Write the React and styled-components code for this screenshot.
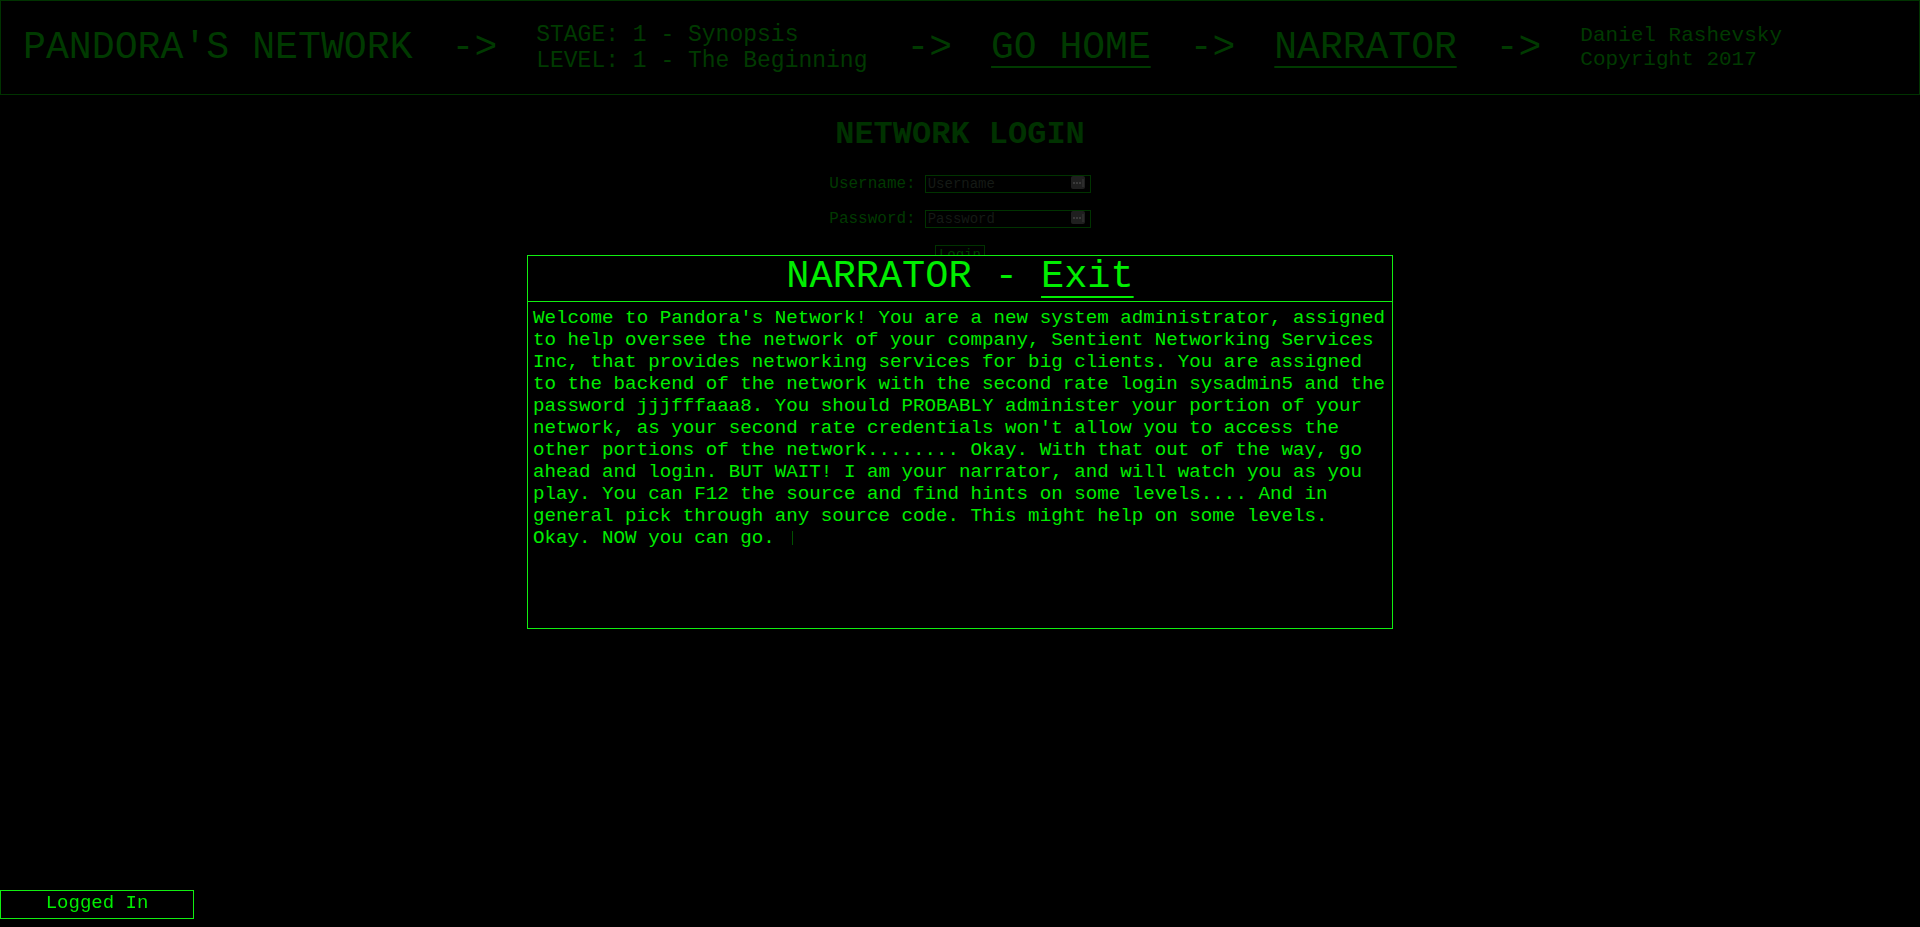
import React from "react";
import styled, { createGlobalStyle } from "styled-components";

const Color = {
  bright: "#00ee00",
  border: "#11ee11",
  dim: "#003a00",
  dimBorder: "#003300",
  faint: "#151a15",
};

const GlobalStyle = createGlobalStyle`
  html, body {
    margin: 0;
    background: #000;
    font-family: "Liberation Mono", "Courier New", monospace;
  }
`;

const NARRATION =
  "Welcome to Pandora's Network! You are a new system administrator, assigned to help oversee the network of your company, Sentient Networking Services Inc, that provides networking services for big clients. You are assigned to the backend of the network with the second rate login sysadmin5 and the password jjjfffaaa8. You should PROBABLY administer your portion of your network, as your second rate credentials won't allow you to access the other portions of the network........ Okay. With that out of the way, go ahead and login. BUT WAIT! I am your narrator, and will watch you as you play. You can F12 the source and find hints on some levels.... And in general pick through any source code. This might help on some levels. Okay. NOW you can go. ";

function KeyIcon() {
  return (
    <svg width="15" height="14" viewBox="0 0 15 14">
      <rect x="0" y="0" width="14" height="13" rx="2" fill="#1f1f1f" />
      <rect x="2" y="6" width="2" height="2" fill="#3a3a3a" />
      <rect x="5" y="6" width="2" height="2" fill="#3a3a3a" />
      <rect x="8" y="6" width="2" height="2" fill="#3a3a3a" />
      <rect x="11.5" y="3" width="1" height="8" fill="#3a3a3a" />
    </svg>
  );
}

export default function App() {
  return (
    <Page>
      <GlobalStyle />
      <Header>
        <Title>PANDORA'S NETWORK</Title>
        <Arrow>-&gt;</Arrow>
        <InfoBlock size={23} lineHeight={26}>
          <p>STAGE: 1 - Synopsis</p>
          <p>LEVEL: 1 - The Beginning</p>
        </InfoBlock>
        <Arrow>-&gt;</Arrow>
        <NavLink href="#">GO HOME</NavLink>
        <Arrow>-&gt;</Arrow>
        <NavLink href="#">NARRATOR</NavLink>
        <Arrow>-&gt;</Arrow>
        <InfoBlock size={21} lineHeight={24}>
          <p>Daniel Rashevsky</p>
          <p>Copyright 2017</p>
        </InfoBlock>
      </Header>

      <LoginSection>
        <LoginTitle>NETWORK LOGIN</LoginTitle>
        <Form>
          <Row>
            <Label>Username:</Label>
            <Field>
              <Input placeholder="Username" />
              <FieldIcon>
                <KeyIcon />
              </FieldIcon>
            </Field>
          </Row>
          <Row>
            <Label>Password:</Label>
            <Field>
              <Input placeholder="Password" type="password" />
              <FieldIcon>
                <KeyIcon />
              </FieldIcon>
            </Field>
          </Row>
          <LoginButton>Login</LoginButton>
        </Form>
      </LoginSection>

      <Modal>
        <ModalTitle>
          NARRATOR - <ExitLink href="#">Exit</ExitLink>
        </ModalTitle>
        <ModalBody>
          {NARRATION}
          <Caret />
        </ModalBody>
      </Modal>

      <Status>Logged In</Status>
    </Page>
  );
}

const Page = styled.div`
  position: relative;
  min-height: 100vh;
  background: #000;
`;

const Header = styled.header`
  display: flex;
  align-items: center;
  gap: 39px;
  height: 93px;
  padding-left: 22px;
  border: 1px solid ${Color.dimBorder};
  color: ${Color.dim};
`;

const Title = styled.h1`
  margin: 0;
  font-size: 38.2px;
  font-weight: normal;
  white-space: nowrap;
`;

const Arrow = styled.span`
  font-size: 38px;
  white-space: nowrap;
`;

const InfoBlock = styled.div`
  font-size: ${(p) => p.size}px;
  line-height: ${(p) => p.lineHeight}px;
  white-space: nowrap;

  p {
    margin: 0;
  }
`;

const NavLink = styled.a`
  font-size: 38px;
  white-space: nowrap;
  color: ${Color.dim};
  text-decoration: underline;
  text-decoration-thickness: 2px;
  text-underline-offset: 8px;
`;

const LoginSection = styled.section`
  display: flex;
  flex-direction: column;
  align-items: center;
  padding-top: 22px;
  color: ${Color.dim};
`;

const LoginTitle = styled.h2`
  margin: 0;
  font-size: 32px;
  line-height: 36px;
  font-weight: bold;
  color: #003200;
`;

const Form = styled.div`
  display: flex;
  flex-direction: column;
  align-items: center;
  gap: 17px;
  margin-top: 22px;
`;

const Row = styled.div`
  display: flex;
  align-items: center;
  gap: 9px;
  height: 18px;
`;

const Label = styled.label`
  font-size: 16px;
`;

const Field = styled.div`
  position: relative;
  display: flex;
`;

const Input = styled.input`
  box-sizing: border-box;
  width: 166px;
  height: 18px;
  padding: 0 2px;
  background: transparent;
  border: 1px solid ${Color.dimBorder};
  font-family: "Liberation Mono", monospace;
  font-size: 14px;
  color: ${Color.dim};
  outline: none;

  &::placeholder {
    color: ${Color.faint};
  }
`;

const FieldIcon = styled.span`
  position: absolute;
  right: 5px;
  top: 1px;
  display: flex;
`;

const LoginButton = styled.button`
  box-sizing: border-box;
  width: 50px;
  height: 20px;
  padding: 0;
  background: transparent;
  border: 1px solid ${Color.dimBorder};
  font-family: "Liberation Mono", monospace;
  font-size: 14px;
  color: ${Color.dim};
`;

const Modal = styled.div`
  position: absolute;
  top: 255px;
  left: 50%;
  transform: translateX(-50%);
  box-sizing: border-box;
  width: 866px;
  height: 374px;
  display: flex;
  flex-direction: column;
  background: #000;
  border: 1px solid ${Color.border};
  color: ${Color.bright};
`;

const ModalTitle = styled.div`
  height: 45px;
  flex-shrink: 0;
  text-align: center;
  font-size: 38.6px;
  line-height: 43px;
  border-bottom: 1px solid ${Color.border};
`;

const ExitLink = styled.a`
  color: ${Color.bright};
  text-decoration: underline;
  text-decoration-thickness: 2px;
  text-underline-offset: 9px;
`;

const ModalBody = styled.div`
  padding: 5px 4px 0 5px;
  font-size: 19.2px;
  line-height: 22px;
`;

const Caret = styled.span`
  display: inline-block;
  width: 1px;
  height: 14px;
  margin-left: 6px;
  vertical-align: -2px;
  background: #005200;
`;

const Status = styled.div`
  position: fixed;
  left: 0;
  bottom: 8px;
  box-sizing: border-box;
  width: 194px;
  height: 29px;
  padding-bottom: 3px;
  display: flex;
  align-items: center;
  justify-content: center;
  border: 1px solid ${Color.border};
  color: ${Color.bright};
  font-size: 19px;
`;
